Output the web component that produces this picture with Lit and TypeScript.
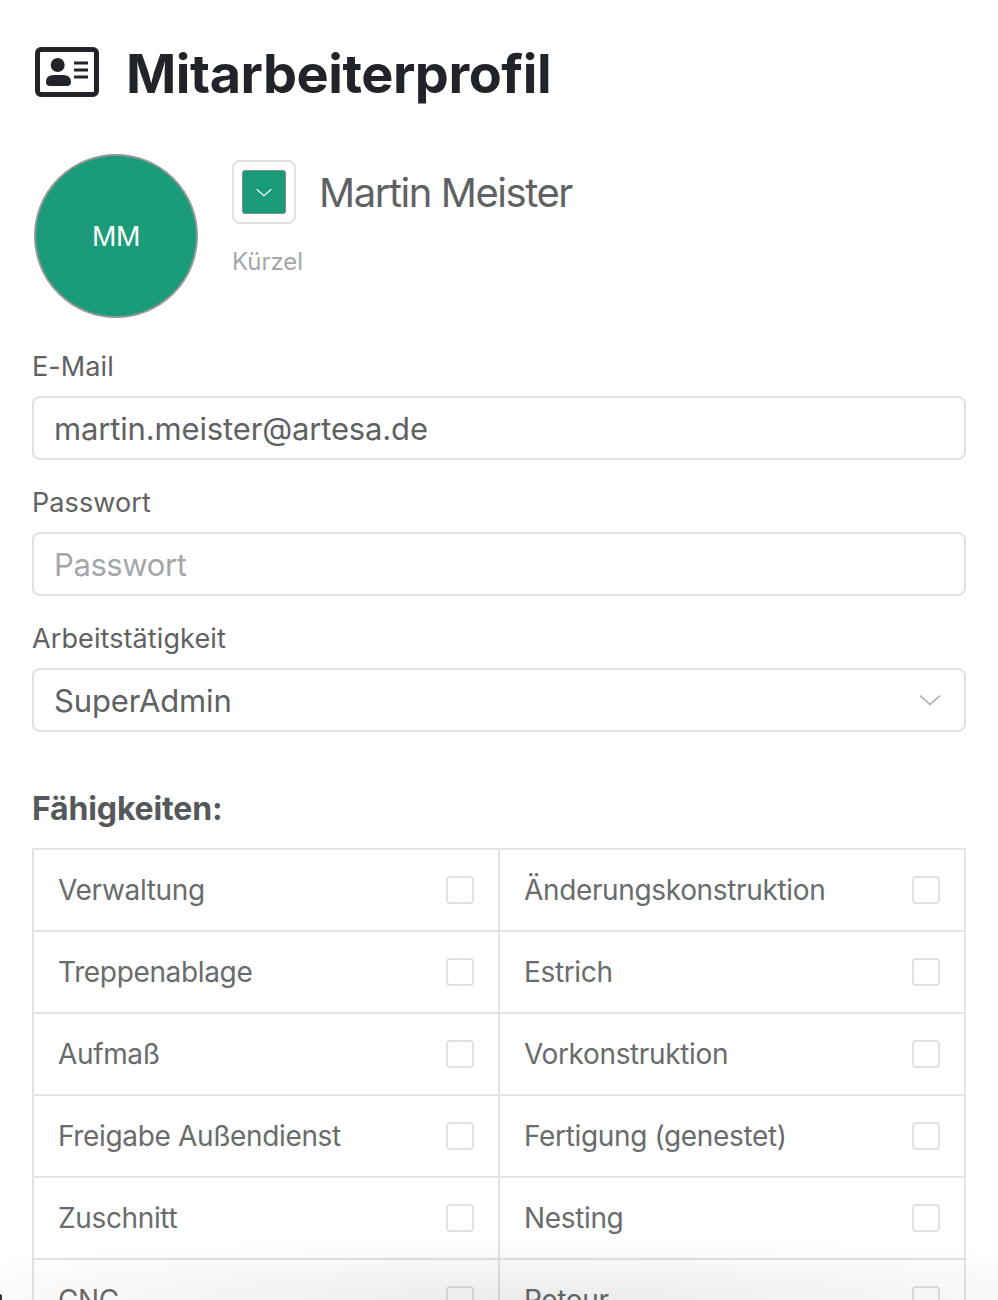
import { LitElement, html, css, svg } from "lit";
import { customElement } from "lit/decorators.js";

const skills = [
  ["Verwaltung", "Änderungskonstruktion"],
  ["Treppenablage", "Estrich"],
  ["Aufmaß", "Vorkonstruktion"],
  ["Freigabe Außendienst", "Fertigung (genestet)"],
  ["Zuschnitt", "Nesting"],
  ["CNC", "Retour"],
];

const chevron = svg`<path d="M1 1 L11 10 L21 1" fill="none" stroke="currentColor" stroke-width="1.6"/>`;

@customElement("app-root")
export class AppRoot extends LitElement {
  static styles = css`
    :host {
      display: block;
      position: relative;
      width: 998px;
      height: 1300px;
      overflow: hidden;
      background: #fff;
      font-family: Inter, "Liberation Sans", sans-serif;
      color: #5f6163;
      box-sizing: border-box;
    }
    .page { padding: 0 32px; display: flex; flex-direction: column; }
    .head { display: flex; align-items: center; gap: 27px; height: 148px; padding-left: 3px; box-sizing: border-box; }
    .idcard { width: 64px; height: 50px; color: #212529; flex: none; margin-bottom: 4px; }
    h1 { margin: 0; font-size: 54px; line-height: 64px; font-weight: 700; color: #212529; letter-spacing: -0.45px; }
    .profile { display: flex; gap: 34px; height: 164px; padding-top: 6px; padding-left: 2px; }
    .avatar {
      width: 164px; height: 164px; box-sizing: border-box; border-radius: 50%;
      background: #1a9b79; border: 2px solid #8f9793; color: #fff;
      display: flex; align-items: center; justify-content: center; font-size: 27px; letter-spacing: -0.4px;
    }
    .side { display: flex; flex-direction: column; padding-top: 6px; }
    .nameRow { display: flex; align-items: center; gap: 24px; height: 64px; }
    .swatch {
      width: 64px; height: 64px; box-sizing: border-box; border: 2px solid #dee2e6; border-radius: 8px;
      display: flex; align-items: center; justify-content: center;
    }
    .swatchInner {
      width: 44px; height: 44px; box-sizing: border-box; border-radius: 3px;
      background: #1a9b79; border: 1.5px solid #7d8a86; color: #fff;
      display: flex; align-items: center; justify-content: center;
    }
    .swatchInner svg { width: 16px; height: 9px; }
    .name { font-size: 40px; line-height: 48px; color: #5f6163; letter-spacing: -1.45px; margin-left: -1px; padding-top: 2px; }
    .short { font-size: 24px; line-height: 32px; color: #a4a7aa; margin-top: 22px; letter-spacing: -0.05px; }
    .label { font-size: 27px; line-height: 32px; margin-top: 27px; color: #5f6163; letter-spacing: 0.1px; }
    .label.first { margin-top: 33px; }
    .field {
      margin-top: 13px; height: 64px; box-sizing: border-box; border: 2px solid #dee2e6; border-radius: 8px;
      padding: 0 20px; display: flex; align-items: center; justify-content: space-between;
      font-size: 31px; letter-spacing: -0.15px; color: #5f6163;
    }
    .field.ph { color: #a4a7aa; letter-spacing: -0.4px; }
    .field svg { width: 22px; height: 12px; color: #a9abad; margin-right: 3px; }
    h2 { margin: 58px 0 0; font-size: 32px; line-height: 38px; font-weight: 700; color: #55585a; letter-spacing: -0.15px; }
    .grid {
      margin-top: 20px; display: grid; grid-template-columns: 466px 466px; border-top: 2px solid #e2e3e4;
      border-left: 2px solid #e2e3e4; box-sizing: border-box;
    }
    .cell {
      height: 82px; box-sizing: border-box; border-right: 2px solid #e2e3e4; border-bottom: 2px solid #e2e3e4;
      padding: 0 24px 0 24px; display: flex; align-items: center; justify-content: space-between;
      font-size: 28px; letter-spacing: -0.35px; color: #696b6d;
    }
    .box { width: 28px; height: 28px; box-sizing: border-box; border: 2px solid #dfe1e3; border-radius: 4px; background: #fff; flex: none; }
    .fade {
      position: absolute; left: 0; right: 0; bottom: 0; height: 64px; pointer-events: none;
      background: radial-gradient(ellipse 72% 100% at 54% 100%, rgba(0,0,0,0.08), rgba(0,0,0,0) 100%);
    }
    .corner {
      position: absolute; left: 0; bottom: 0; width: 2px; height: 6px; background: #333;
      border-top-right-radius: 2px;
    }
  `;

  render() {
    return html`
      <div class="page">
        <div class="head">
          <svg class="idcard" viewBox="0 0 64 50" aria-hidden="true">
            <rect x="2.5" y="2.5" width="59" height="45" rx="3.5" fill="none" stroke="#212529" stroke-width="5"/>
            <circle cx="22.7" cy="18" r="7" fill="#212529"/>
            <path d="M11 35 q0 -7 8 -7 h9 q8 0 8 7 q0 4 -4 4 h-17 q-4 0 -4 -4z" fill="#212529"/>
            <path d="M39 16 h14 M39 23 h14 M39 30 h14" stroke="#212529" stroke-width="3" fill="none"/>
          </svg>
          <h1>Mitarbeiterprofil</h1>
        </div>
        <div class="profile">
          <div class="avatar">MM</div>
          <div class="side">
            <div class="nameRow">
              <div class="swatch">
                <div class="swatchInner"><svg viewBox="0 0 22 11">${chevron}</svg></div>
              </div>
              <div class="name">Martin Meister</div>
            </div>
            <div class="short">Kürzel</div>
          </div>
        </div>
        <div class="label first">E-Mail</div>
        <div class="field">martin.meister@artesa.de</div>
        <div class="label">Passwort</div>
        <div class="field ph">Passwort</div>
        <div class="label">Arbeitstätigkeit</div>
        <div class="field">SuperAdmin<svg viewBox="0 0 22 11">${chevron}</svg></div>
        <h2>Fähigkeiten:</h2>
        <div class="grid">
          ${skills.flat().map((s) => html`<div class="cell"><span>${s}</span><span class="box"></span></div>`)}
        </div>
      </div>
      <div class="fade"></div>
      <div class="corner"></div>
    `;
  }
}
